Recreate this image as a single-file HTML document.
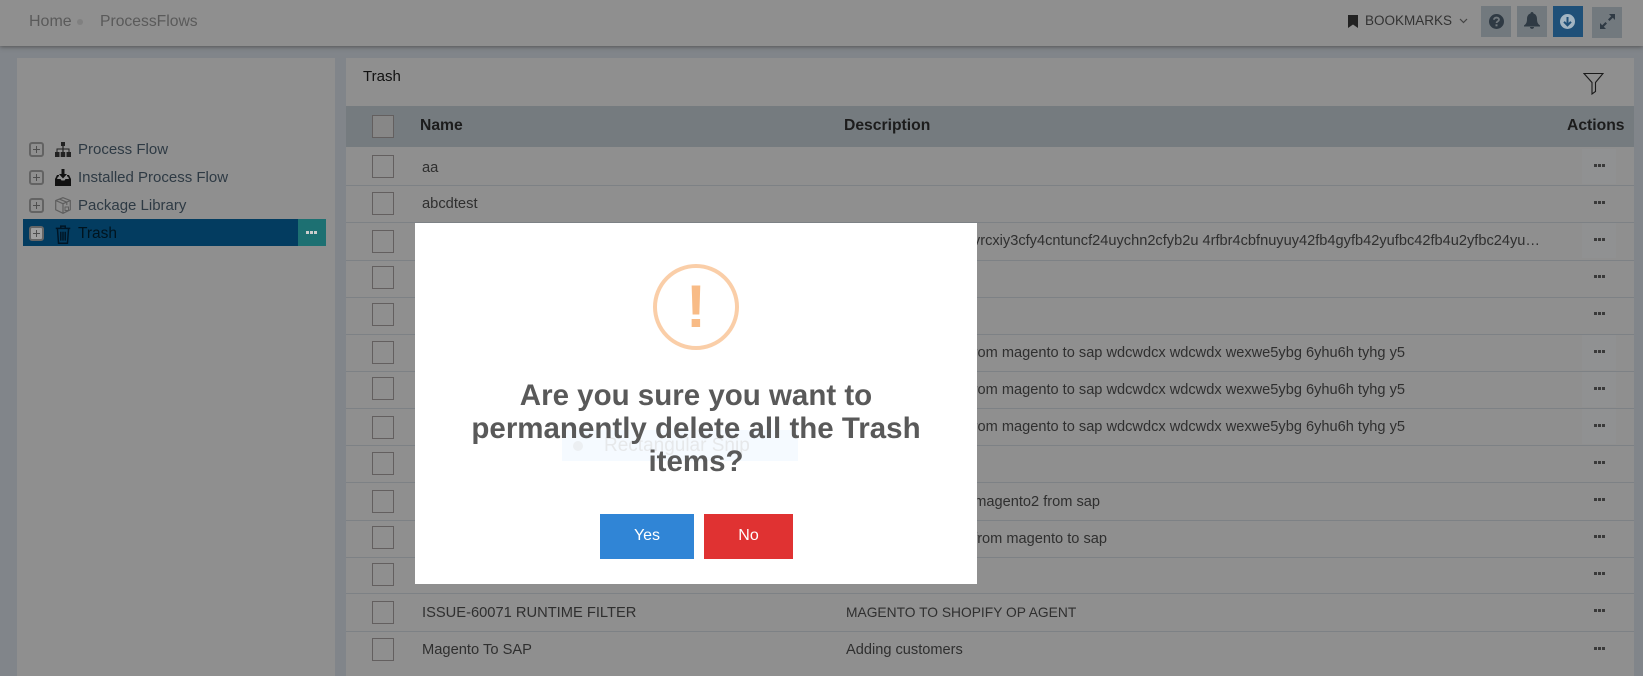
<!DOCTYPE html>
<html><head><meta charset="utf-8"><style>
html,body{margin:0;padding:0;width:1643px;height:676px;overflow:hidden;background:#81858a;font-family:"Liberation Sans",sans-serif}
.a{position:absolute;white-space:nowrap}
.line{position:absolute;left:346px;width:1288px;height:1px;background:#7d8185}
.cb{position:absolute;left:372px;width:20px;height:21px;border:1px solid #635f5f;box-sizing:content-box}
.t{position:absolute;left:422px;font-size:14.7px;line-height:20px;color:#2f2f2f;white-space:nowrap}
.d{position:absolute;font-size:14.6px;line-height:20px;color:#2f2f2f;white-space:nowrap}
.dots{position:absolute;left:1594px;width:11px;height:3px;background:repeating-linear-gradient(90deg,#3a3a3a 0,#3a3a3a 3px,transparent 3px,transparent 4px)}
.act{position:absolute;left:1582px;width:34px;height:35px;background:#909192}
.pl{position:absolute;left:29px;width:11px;height:11px;border:2px solid #636363;border-radius:3px}
.pl:before{content:"";position:absolute;left:2px;right:2px;top:5px;height:1px;background:#4f4f4f}
.pl:after{content:"";position:absolute;top:2px;bottom:2px;left:5px;width:1px;background:#4f4f4f}
.s{position:absolute;left:78px;font-size:15px;line-height:20px;color:#2e3a44;white-space:nowrap}
.hb{position:absolute;width:30px;height:31px;background:#72797e}
</style></head><body>
<div class="a" style="left:0;top:0;width:1643px;height:46px;background:#8f8f8f;box-shadow:0 1px 4px #555"></div>
<div class="a" style="left:29px;top:12px;font-size:16px;line-height:19px;color:#5a5a5a">Home</div>
<div class="a" style="left:77px;top:19px;width:6px;height:6px;border-radius:50%;background:#808080"></div>
<div class="a" style="left:100px;top:12px;font-size:15.7px;line-height:19px;color:#5a5a5a">ProcessFlows</div>
<svg class="a" style="left:1348px;top:15px" width="10" height="13" viewBox="0 0 10 13"><path d="M0 0H10V13L5 9.500L0 13Z" fill="#222"/></svg>
<div class="a" style="left:1365px;top:13px;font-size:13.5px;line-height:16px;color:#333">BOOKMARKS</div>
<svg class="a" style="left:1459px;top:18px" width="9" height="6" viewBox="0 0 9 6"><path d="M1 1L4.500 4.500L8 1" fill="none" stroke="#444" stroke-width="1.200"/></svg>
<div class="hb" style="left:1481px;top:6px"></div>
<div class="hb" style="left:1517px;top:6px"></div>
<div class="hb" style="left:1553px;top:6px;background:#1f5078"></div>
<div class="hb" style="left:1592px;top:7px"></div>
<svg class="a" style="left:1489px;top:14px" width="15" height="15" viewBox="0 0 15 15"><circle cx="7.500" cy="7.500" r="7.500" fill="#2f3a44"/><path d="M5 5.800C5 2.800 10 2.800 10 5.800C10 7.500 7.500 7.300 7.500 9" fill="none" stroke="#72797e" stroke-width="1.800"/><rect x="6.500" y="10.300" width="2" height="2" fill="#72797e"/></svg>
<svg class="a" style="left:1524px;top:12px" width="16" height="17" viewBox="0 0 16 17"><path d="M8 0C9 0 9.500 .8 9.500 1.500C12 2.200 13 4.500 13 7C13 10.500 14 12 16 13.500V14.500H0V13.500C2 12 3 10.500 3 7C3 4.500 4 2.200 6.500 1.500C6.500 .8 7 0 8 0Z" fill="#2f3a44"/><path d="M6 15H10C10 17.500 6 17.500 6 15Z" fill="#2f3a44"/></svg>
<svg class="a" style="left:1560px;top:14px" width="15" height="15" viewBox="0 0 15 15"><circle cx="7.500" cy="7.500" r="7.500" fill="#a3b5c2"/><path d="M7.500 3V11M4 7.800L7.500 11.300L11 7.800" fill="none" stroke="#1f5078" stroke-width="2"/></svg>
<svg class="a" style="left:1600px;top:14px" width="15" height="15" viewBox="0 0 15 15"><path d="M9 0H15V6L12.800 3.800L9.500 7L8 5.500L11.200 2.200ZM6 15H0V9L2.200 11.200L5.500 8L7 9.500L3.800 12.800Z" fill="#2f3a44"/></svg>

<div class="a" style="left:17px;top:58px;width:318px;height:618px;background:#8f8f8f"></div>
<div class="pl" style="top:142px"></div><div class="pl" style="top:170px"></div><div class="pl" style="top:198px"></div>
<svg class="a" style="left:55px;top:142px" width="16" height="15" viewBox="0 0 16 15"><path d="M6 0H10V4H8.600V6.500H14.500V10H13.500V7.500H8.600V10H7.400V7.500H2.500V10H1.500V6.500H7.400V4H6Z" fill="#222"/><rect x="0" y="10" width="4.500" height="5" fill="#222"/><rect x="5.700" y="10" width="4.500" height="5" fill="#222"/><rect x="11.500" y="10" width="4.500" height="5" fill="#222"/></svg>
<svg class="a" style="left:55px;top:169px" width="16" height="17" viewBox="0 0 16 17"><path d="M6.500 0H9.500V5H12L8 9.500L4 5H6.500Z" fill="#111"/><path d="M0 10L2 6H4V7.500H3L2 10H5.500L6.500 11.500H9.500L10.500 10H14L13 7.500H12V6H14L16 10V17H0Z" fill="#111"/></svg>
<svg class="a" style="left:55px;top:197px" width="16" height="17" viewBox="0 0 16 17"><path d="M8 .7L15.300 3.500V12.800L8 16.300L.7 12.800V3.500ZM.7 3.500L8 6.700L15.300 3.500M8 6.700V16.300M4.300 2.100L11.800 5.200V8" fill="none" stroke="#5e5e5e" stroke-width="1.200"/><rect x="10" y="10" width="3.500" height="3.500" fill="none" stroke="#5e5e5e"/></svg>
<div class="s" style="top:140px">Process Flow</div>
<div class="s" style="top:168px">Installed Process Flow</div>
<div class="s" style="top:196px">Package Library</div>
<div class="a" style="left:23px;top:219px;width:275px;height:27px;background:#033c60"></div>
<div class="a" style="left:298px;top:219px;width:28px;height:27px;background:#1d7072"></div>
<div class="a" style="left:306px;top:231px;width:11px;height:3px;background:repeating-linear-gradient(90deg,#ccc 0,#ccc 3px,transparent 3px,transparent 4px)"></div>
<div class="pl" style="top:226px;background:#a0a0a0;border-color:#666"></div>
<svg class="a" style="left:55px;top:225px" width="16" height="19" viewBox="0 0 14 17"><path d="M.5 3H13.500M5 3V1H9V3M2 3L3 16.300H11L12 3M5 6V14M7 6V14M9 6V14" fill="none" stroke="#001525" stroke-width="1.300"/></svg>
<div class="s" style="top:224px;color:#00141f;font-size:15.500px">Trash</div>

<div class="a" style="left:346px;top:58px;width:1288px;height:618px;background:#8f8f8f"></div>
<div class="a" style="left:363px;top:67px;font-size:15px;line-height:20px;color:#111">Trash</div>
<svg class="a" style="left:1583px;top:72px" width="21" height="23" viewBox="0 0 21 23"><path d="M1 1.500H20L12.500 10.500V19.500L9 22V10.500Z" fill="none" stroke="#1a1a1a" stroke-width="1.100"/></svg>
<div class="a" style="left:346px;top:106px;width:1288px;height:41px;background:#757b7f"></div>
<div class="cb" style="top:115px;background:#878787"></div>
<div class="a" style="left:420px;top:116px;font-size:15.700px;font-weight:bold;line-height:20px;color:#1c1c1c">Name</div>
<div class="a" style="left:844px;top:116px;font-size:15.700px;font-weight:bold;line-height:20px;color:#1c1c1c">Description</div>
<div class="a" style="left:1567px;top:116px;font-size:15.700px;font-weight:bold;line-height:20px;color:#1c1c1c">Actions</div>

<div class="line" style="top:185px"></div><div class="line" style="top:222px"></div><div class="line" style="top:260px"></div><div class="line" style="top:297px"></div><div class="line" style="top:334px"></div><div class="line" style="top:371px"></div><div class="line" style="top:408px"></div><div class="line" style="top:445px"></div><div class="line" style="top:482px"></div><div class="line" style="top:520px"></div><div class="line" style="top:557px"></div><div class="line" style="top:593px"></div><div class="line" style="top:631px"></div>

<div class="cb" style="top:155px"></div><div class="cb" style="top:192px"></div><div class="cb" style="top:230px"></div><div class="cb" style="top:266px"></div><div class="cb" style="top:303px"></div><div class="cb" style="top:341px"></div><div class="cb" style="top:377px"></div><div class="cb" style="top:416px"></div><div class="cb" style="top:452px"></div><div class="cb" style="top:490px"></div><div class="cb" style="top:526px"></div><div class="cb" style="top:563px"></div><div class="cb" style="top:601px"></div><div class="cb" style="top:638px"></div>

<div class="act" style="top:149px"></div><div class="act" style="top:223px"></div><div class="act" style="top:335px"></div><div class="act" style="top:372px"></div><div class="act" style="top:409px"></div>
<div class="dots" style="top:164px"></div><div class="dots" style="top:201px"></div><div class="dots" style="top:238px"></div><div class="dots" style="top:275px"></div><div class="dots" style="top:312px"></div><div class="dots" style="top:350px"></div><div class="dots" style="top:387px"></div><div class="dots" style="top:424px"></div><div class="dots" style="top:461px"></div><div class="dots" style="top:498px"></div><div class="dots" style="top:535px"></div><div class="dots" style="top:572px"></div><div class="dots" style="top:609px"></div><div class="dots" style="top:647px"></div>

<div class="t" style="top:158px">aa</div>
<div class="t" style="top:194px">abcdtest</div>
<div class="t" style="top:603px">ISSUE-60071 RUNTIME FILTER</div>
<div class="t" style="top:640px">Magento To SAP</div>
<div class="d" style="left:846px;top:603px;font-size:13.800px">MAGENTO TO SHOPIFY OP AGENT</div>
<div class="d" style="left:846px;top:640px">Adding customers</div>
<div class="d" style="right:103px;top:231px">ewvrcxiy3cfy4cntuncf24uychn2cfyb2u 4rfbr4cbfnuyuy42fb4gyfb42yufbc42fb4u2yfbc24yu…</div>
<div class="d" style="right:238px;top:343px">from magento to sap wdcwdcx wdcwdx wexwe5ybg 6yhu6h tyhg y5</div>
<div class="d" style="right:238px;top:380px">from magento to sap wdcwdcx wdcwdx wexwe5ybg 6yhu6h tyhg y5</div>
<div class="d" style="right:238px;top:417px">from magento to sap wdcwdcx wdcwdx wexwe5ybg 6yhu6h tyhg y5</div>
<div class="d" style="right:543px;top:492px">magento2 from sap</div>
<div class="d" style="right:536px;top:529px">from magento to sap</div>

<div class="a" style="left:415px;top:223px;width:562px;height:361px;background:#fff"></div>
<div class="a" style="left:562px;top:430px;width:236px;height:31px;background:#f5faff"></div>
<div class="a" style="left:573px;top:441px;width:10px;height:10px;border-radius:50%;background:#eceff2"></div>
<div class="a" style="left:604px;top:434px;font-size:19px;line-height:24px;color:#e6e8ea">Rectangular Snip</div>
<div class="a" style="left:653px;top:264px;width:78px;height:78px;border:4px solid #facea8;border-radius:50%;text-align:center;font-size:60px;font-weight:bold;line-height:78px;color:#f8bb86;box-sizing:content-box">!</div>
<div class="a" style="left:415px;top:379px;width:562px;text-align:center;font-size:29.500px;font-weight:bold;line-height:33px;color:#595959;white-space:normal;box-sizing:border-box;padding:0 40px">Are you sure you want to<br>permanently delete all the Trash<br>items?</div>
<div class="a" style="left:600px;top:514px;width:94px;height:45px;background:#3085d6;color:#fff;font-size:16px;line-height:44px;text-align:center">Yes</div>
<div class="a" style="left:704px;top:514px;width:89px;height:45px;background:#e03232;color:#fff;font-size:16px;line-height:44px;text-align:center">No</div>
</body></html>
